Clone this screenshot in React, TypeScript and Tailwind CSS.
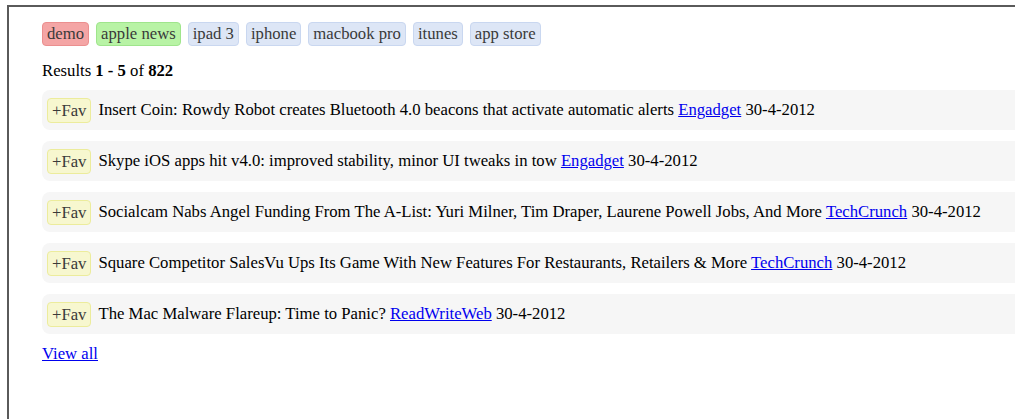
import React from 'react';

type Tag = { label: string; tone: 'red' | 'green' | 'blue' };

type Story = { title: string; source: string; date: string };

const tags: Tag[] = [
  { label: 'demo', tone: 'red' },
  { label: 'apple news', tone: 'green' },
  { label: 'ipad 3', tone: 'blue' },
  { label: 'iphone', tone: 'blue' },
  { label: 'macbook pro', tone: 'blue' },
  { label: 'itunes', tone: 'blue' },
  { label: 'app store', tone: 'blue' },
];

const stories: Story[] = [
  { title: 'Insert Coin: Rowdy Robot creates Bluetooth 4.0 beacons that activate automatic alerts', source: 'Engadget', date: '30-4-2012' },
  { title: 'Skype iOS apps hit v4.0: improved stability, minor UI tweaks in tow', source: 'Engadget', date: '30-4-2012' },
  { title: 'Socialcam Nabs Angel Funding From The A-List: Yuri Milner, Tim Draper, Laurene Powell Jobs, And More', source: 'TechCrunch', date: '30-4-2012' },
  { title: 'Square Competitor SalesVu Ups Its Game With New Features For Restaurants, Retailers & More', source: 'TechCrunch', date: '30-4-2012' },
  { title: 'The Mac Malware Flareup: Time to Panic?', source: 'ReadWriteWeb', date: '30-4-2012' },
];

const toneClass: Record<Tag['tone'], string> = {
  red: 'bg-[#f4a5a5] border-[#eb8f8f]',
  green: 'bg-[#b8f3a5] border-[#9fe58c]',
  blue: 'bg-[#dde6f6] border-[#c9d7f0]',
};

export default function App() {
  return (
    <div className="w-[1015px] h-[419px] overflow-hidden bg-white font-['Liberation_Serif',serif] text-[16.7px] text-black">
      <div className="ml-[7px] mt-[5px] h-full border-l-2 border-t-2 border-[#5a5a5a] pl-[33px] pt-[15px]">
        {/* tag filters */}
        <div className="flex gap-[7px]">
          {tags.map((tag) => (
            <span
              key={tag.label}
              className={`h-[24px] leading-[22px] px-[4px] border rounded-[4px] text-[#3a3a3a] ${toneClass[tag.tone]}`}
            >
              {tag.label}
            </span>
          ))}
        </div>

        <p className="mt-[15px] leading-[20px]">
          Results <b>1 - 5</b> of <b>822</b>
        </p>

        {/* story list */}
        <ul className="mt-[9px] flex flex-col gap-[11px]">
          {stories.map((story) => (
            <li
              key={story.title}
              className="h-[40px] flex items-center pl-[5px] bg-[#f6f6f6] rounded-l-[8px] whitespace-nowrap"
            >
              <span className="h-[25px] leading-[23px] px-[4px] border border-[#ecec9c] bg-[#f7f7cf] rounded-[4px] text-[#3a3a3a]">
                +Fav
              </span>
              <span className="ml-[7px]">
                {story.title}{' '}
                <a href="#" className="text-[#0000ee] underline">
                  {story.source}
                </a>{' '}
                {story.date}
              </span>
            </li>
          ))}
        </ul>

        <a href="#" className="block mt-[7px] text-[#0000ee] underline w-fit">
          View all
        </a>
      </div>
    </div>
  );
}
